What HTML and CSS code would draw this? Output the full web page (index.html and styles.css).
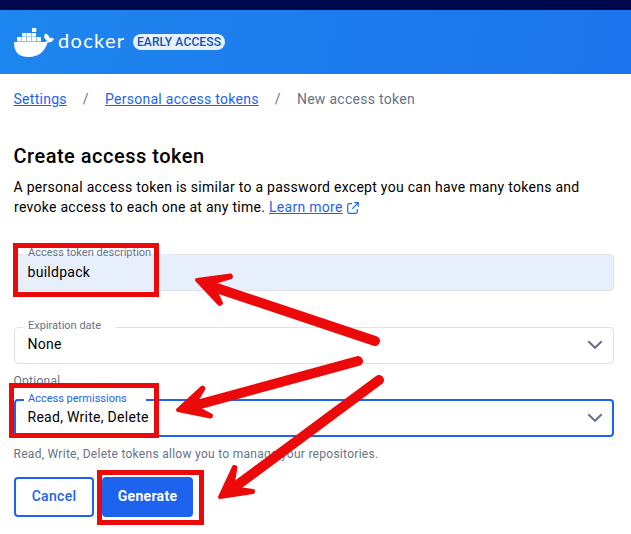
FILE: index.html
```html
<!DOCTYPE html>
<html lang="en">
<head>
<meta charset="utf-8">
<title>New access token</title>
<link rel="stylesheet" href="styles.css">
</head>
<body>
<div class="topbar"></div>
<header class="header">
  <svg class="whale" width="41" height="30" viewBox="0 0 41 30" fill="#fff">
    <path d="M0 14H29.3C31 14 32.300 13.500 33 12.500C30 10.500 29.300 8 31.300 5.500C34 6.500 35.300 8 35.500 10C37.500 9.500 39 9.900 40 11C39 13.500 36.500 14.500 33.700 14.500C30.500 24 24.500 29 14.500 29C4.500 29 0 24.300 0 14Z"/>
    <path d="M3.200 9h4v4h-4zM8.100 9h4v4h-4zM13 9h4v4h-4zM18 9h4v4h-4zM23 9h4v4h-4zM8.100 5h4v3.200h-4zM13 5h4v3.200h-4zM18 5h4v3.200h-4zM18 0h4.300v4h-4.300z"/>
    <path d="M3 9h24v5h-24zM8.100 5h14v4h-14z" fill-opacity=".5"/>
  </svg>
  <span class="wordmark">docker</span>
  <span class="badge">EARLY ACCESS</span>
</header>
<main class="page">
  <nav class="crumbs"><a href="#">Settings</a><span class="sep">/</span><a href="#">Personal access tokens</a><span class="sep">/</span><span>New access token</span></nav>
  <h1>Create access token</h1>
  <p class="intro">A personal access token is similar to a password except you can have many tokens and<br>revoke access to each one at any time. <a href="#">Learn more</a>
    <svg class="ext" width="12" height="12" viewBox="0 0 12 12" fill="none" stroke="#1d63ed" stroke-width="1.2"><path d="M5 1.700H2.200Q.7 1.700 .7 3.200V9.800Q.7 11.300 2.200 11.300H8.800Q10.300 11.300 10.300 9.800V7M7.300 .7H11.300V4.700M11.300 .7L5.200 6.800"/></svg>
  </p>
  <div class="field filled"><span class="notch n1"></span><span class="label">Access token description</span><span class="value">buildpack</span></div>
  <div class="field expiry"><span class="notch n2"></span><span class="label">Expiration date</span><span class="value">None</span>
    <svg width="16" height="10" viewBox="0 0 16 10" fill="none" stroke="#677285" stroke-width="2"><path d="M1.300 1.300L8 7.800L14.700 1.300"/></svg></div>
  <div class="help optional">Optional</div>
  <div class="field focused"><span class="notch n3"></span><span class="label">Access permissions</span><span class="value">Read, Write, Delete</span>
    <svg width="16" height="10" viewBox="0 0 16 10" fill="none" stroke="#677285" stroke-width="2"><path d="M1.300 1.300L8 7.800L14.700 1.300"/></svg></div>
  <div class="help">Read, Write, Delete tokens allow you to manage your repositories.</div>
  <div class="actions"><button class="btn cancel">Cancel</button><button class="btn generate">Generate</button></div>
</main>
<svg class="marks" width="631" height="534" viewBox="0 0 631 534" fill="none" stroke="#eb0909">
  <g stroke-width="5"><path d="M15.500 245.500H156.500V294.500H15.500Z"/><path d="M11.500 385.500H156.500V435.500H11.500Z"/><path d="M99.500 472.500H201.500V522.500H99.500Z"/></g>
  <g stroke-width="10" stroke-linecap="round"><path d="M375 341L209 285.500"/><path d="M358 361L193 406"/><path d="M379 380L232 489"/></g>
  <g fill="#eb0909" stroke-width="4" stroke-linejoin="round">
    <path d="M197 280L230.500 275.500L231 277L211 283L221 303L219.500 304L197 280Z"/>
    <path d="M178 410L202.500 387.500L203.500 388.500L193 406L211 415.500L210.500 416.500L178 410Z"/>
    <path d="M220 497L234 467L235.500 467.500L232 488L253 491L253 492L220 497Z"/>
  </g>
</svg>
</body>
</html>
```
FILE: styles.css
```css
* { box-sizing: border-box; }
body { margin: 0; width: 631px; height: 534px; overflow: hidden; background: #fff; color: #000; font: 14px/20px Roboto, sans-serif; letter-spacing: .28px; }
a { color: #1d63ed; text-decoration: underline; text-underline-offset: 1px; }
.topbar { height: 10px; background: #00084d; }
.header { height: 64px; padding: 0 14px; display: flex; align-items: center; background: linear-gradient(100deg, #1d86ef, #1d74ec); }
.whale { margin-top: 1px; }
.wordmark { margin: -4px 0 0 3px; width: 67px; color: #fff; font: 20px/24px Lato, sans-serif; letter-spacing: 1.3px; }
.badge { margin-left: 8px; width: 92px; height: 16px; border-radius: 8px; background: #e5f2fc; color: #1850b5; font: 500 12px/16px Roboto, sans-serif; letter-spacing: .15px; text-align: center; white-space: nowrap; }
.page { padding: 15px 17px 0 14px; }
.crumbs, h1, .intro, .help { text-indent: -.5px; }
.crumbs { display: flex; color: #677285; white-space: nowrap; }
.sep { margin: 0 16.5px; }
h1 { margin: 35px 0 0; font-size: 20px; line-height: 24px; font-weight: 500; letter-spacing: .5px; }
.intro { margin: 9px 0 0; white-space: nowrap; }
.ext { margin-left: 1px; vertical-align: -2px; }
.field { position: relative; display: flex; align-items: center; justify-content: space-between; height: 37px; padding: 0 10px 2px 12.5px; border: 1px solid #e1e2e6; border-radius: 4px; }
.filled { margin-top: 37px; background: #e8effc; }
.expiry { margin-top: 36px; }
.expiry .value { margin-top: -2px; }
.focused { height: 38px; border: 2px solid #1d63ed; padding: 0 9px 2px 11.5px; }
.focused svg { margin-top: 2px; }
.label { position: absolute; left: 13px; top: -10px; font-size: 11px; line-height: 16px; letter-spacing: 0; color: #677285; white-space: nowrap; }
.focused .label { left: 12px; color: #1d63ed; }
.notch { position: absolute; top: -1px; left: 8px; height: 1px; background: #fff; }
.n1 { width: 151px; background: #e8effc; }
.n2 { width: 93px; }
.n3 { width: 122px; height: 2px; top: -2px; }
.help { margin-top: 8px; font-size: 12px; line-height: 18px; color: #677285; }
.optional { height: 27px; }
.actions { display: flex; gap: 8px; margin-top: 14px; }
.btn { height: 40px; padding: 0 0 2px; border: 2px solid #1d63ed; border-radius: 4px; font: 500 14px/20px Roboto, sans-serif; letter-spacing: .3px; }
.cancel { width: 80px; background: #fff; color: #1d63ed; }
.generate { width: 91px; background: #1d63ed; color: #fff; font-weight: 700; }
.marks { position: absolute; left: 0; top: 0; }
```
